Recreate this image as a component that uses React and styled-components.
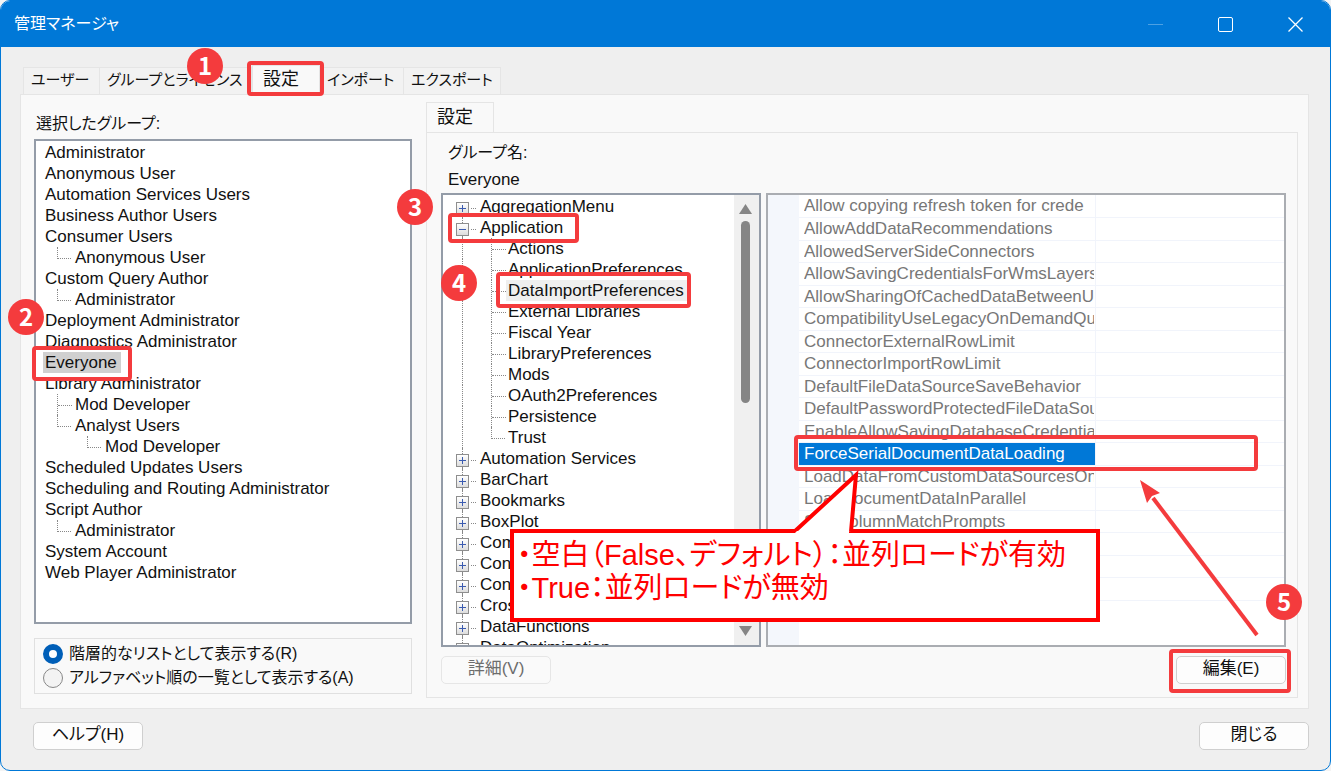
import { useState } from "react";
import styled, { createGlobalStyle } from "styled-components";

const GlobalStyle = createGlobalStyle`
  * {
    box-sizing: border-box;
  }
  body {
    margin: 0;
    background: #f4f4f4;
    color: #111;
    font-family: "Liberation Sans", "Noto Sans CJK JP", sans-serif;
    font-size: 17px;
    font-feature-settings: "palt";
  }
  button, input {
    font: inherit;
    font-feature-settings: inherit;
    color: inherit;
  }
`;

const Window = styled.main`
  display: flex;
  flex-direction: column;
  min-height: 100vh;
  border: 1px solid #0078d7;
  border-radius: 10px;
  background: #efefef;
  overflow: hidden;
`;

const TitleBar = styled.header`
  display: flex;
  align-items: center;
  justify-content: space-between;
  height: 46px;
  padding-left: 13px;
  background: #0078d7;
  color: white;
`;

const Title = styled.h1`
  margin: 0 0 4px;
  font-size: 16px;
  font-weight: 400;
`;

const WindowButtons = styled.div`
  display: flex;
  height: 100%;
`;

const WindowButton = styled.button`
  display: flex;
  align-items: center;
  justify-content: center;
  width: 70px;
  padding: 0;
  border: none;
  background: none;
  opacity: ${(props) => (props.disabled ? 0.3 : 1)};
`;

const Body = styled.div`
  flex: 1;
  display: flex;
  flex-direction: column;
  padding: 18px 21px 0 19px;
`;

const TabStrip = styled.div`
  display: flex;
  align-items: flex-end;
  height: 30px;
  padding-left: 3px;
  margin-bottom: -1px;
`;

const Tab = styled.button`
  position: relative;
  width: ${(props) => props.$width}px;
  height: ${(props) => (props.$active ? 30 : 28)}px;
  padding: 0 0 2px ${(props) => (props.$active ? 10 : 7)}px;
  border: 1px solid #e5e5e5;
  border-left-width: ${(props) => (props.$first || props.$active ? 1 : 0)}px;
  border-bottom-color: ${(props) => (props.$active ? "#f9f9f9" : "#e5e5e5")};
  background: ${(props) => (props.$active ? "#f9f9f9" : "#f2f2f2")};
  font-size: ${(props) => (props.$active ? 18 : 15)}px;
  line-height: 24px;
  text-align: left;
  white-space: nowrap;
`;

const Panel = styled.section`
  flex: 1;
  display: flex;
  gap: 14px;
  padding: 7px 10px 10px 13px;
  border: 1px solid #e5e5e5;
  background: #f9f9f9;
`;

const GroupColumn = styled.div`
  display: flex;
  flex-direction: column;
  width: 378px;
  padding: 12px 0 4px;
`;

const Caption = styled.h2`
  margin: 0 0 5px 2px;
  font-size: 16px;
  font-weight: 400;
  line-height: 20px;
`;

const GroupList = styled.ul`
  flex: 1;
  margin: 0;
  padding: 1px 0 0 9px;
  border: 2px solid #949ca8;
  background: white;
  list-style: none;
`;

const Row = styled.li`
  position: relative;
  display: flex;
  align-items: center;
  height: 21px;
  line-height: 21px;
  white-space: nowrap;
`;

const Name = styled.span`
  padding: 0 4px 0 2px;
  margin-left: -2px;
  background: ${(props) => props.$fill || "none"};
`;

const Guide = styled.span`
  align-self: stretch;
  width: ${(props) => props.$width}px;
  margin-left: ${(props) => props.$indent}px;
  border-left: ${(props) => (props.$last ? "none" : "1px dotted #888")};
`;

const Arm = styled.span`
  display: block;
  width: 14px;
  height: 12px;
  border-left: ${(props) => (props.$last ? "1px dotted #888" : "none")};
  border-bottom: 1px dotted #888;
`;

const ViewOptions = styled.fieldset`
  display: flex;
  flex-direction: column;
  height: 56px;
  margin: 14px 0 0;
  padding: 3px 8px;
  border: 1px solid #e0e0e0;
`;

const Option = styled.label`
  display: flex;
  align-items: center;
  gap: 6px;
  height: 24px;
  font-size: 16px;
  line-height: 24px;
  white-space: nowrap;
`;

const Radio = styled.input`
  appearance: none;
  width: 20px;
  height: 20px;
  margin: 0;
  border: 1px solid #888;
  border-radius: 50%;
  background: #f3f3f3;
  &:checked {
    border: 6px solid #005fb8;
    background: white;
  }
`;

const SettingsColumn = styled.div`
  flex: 1;
  display: flex;
  flex-direction: column;
  min-width: 0;
`;

const SubTab = styled.button`
  align-self: flex-start;
  width: 68px;
  height: 31px;
  margin-bottom: -1px;
  padding: 0 0 2px 10px;
  border: 1px solid #e5e5e5;
  border-bottom-color: #f9f9f9;
  background: #f9f9f9;
  font-size: 18px;
  line-height: 24px;
  text-align: left;
`;

const SubPanel = styled.div`
  flex: 1;
  display: flex;
  flex-direction: column;
  padding: 6px 11px 13px 14px;
  border: 1px solid #e5e5e5;
`;

const GroupName = styled.dl`
  margin: 0 0 0 7px;
  line-height: 27px;
  dt {
    font-size: 16px;
  }
  dd {
    margin: 0;
  }
`;

const Split = styled.div`
  position: relative;
  flex: 1;
  display: flex;
  gap: 5px;
`;

const TreePane = styled.div`
  position: relative;
  display: flex;
  width: 320px;
  border: 2px solid #949ca8;
  background: white;
`;

const Tree = styled.ul`
  flex: 1;
  height: 450px;
  margin: 0;
  padding: 1px 0 0 12px;
  overflow: hidden;
  list-style: none;
`;

const ToggleCell = styled.span`
  display: flex;
  flex-direction: column;
  align-items: center;
  align-self: stretch;
  width: 15px;
`;

const Stem = styled.span`
  flex: ${(props) => props.$grow};
  border-left: 1px dotted ${(props) => (props.$hidden ? "transparent" : "#888")};
`;

const Toggle = styled.button`
  width: 13px;
  height: 13px;
  padding: 0;
  border: 1px solid #8e8e8e;
  background: linear-gradient(#fff, #ddd);
  line-height: 0;
`;

const Dash = styled.span`
  width: 5px;
  height: 1px;
  margin: 3px 4px 0 1px;
  border-top: 1px dotted #888;
`;

const ScrollBar = styled.div`
  display: flex;
  flex-direction: column;
  align-items: center;
  width: 25px;
  padding: 9px 2px 9px 0;
  background: #f0f0f0;
`;

const Thumb = styled.div`
  width: 9px;
  height: 182px;
  margin: 7px 0 auto;
  border-radius: 5px;
  background: #858585;
`;

const PropertyPane = styled.div`
  position: relative;
  flex: 1;
  display: flex;
  align-items: flex-start;
  min-width: 0;
  border: 2px solid #aaadb2;
  background: white;
`;

const Gutter = styled.div`
  align-self: stretch;
  width: 31px;
  background: #f4f7fc;
`;

const Properties = styled.table`
  flex: 1;
  table-layout: fixed;
  width: 100%;
  border-collapse: collapse;
  color: #777;
  tr {
    height: 22px;
  }
  tr:nth-child(even) {
    height: 23px;
  }
  th, td {
    padding: 0;
    border-bottom: 1px solid #f1f4fb;
    line-height: 21px;
  }
`;

const PropertyName = styled.th`
  width: 296px;
  border-right: 1px solid #f1f4fb;
  background: ${(props) => (props.$selected ? "#0078d7" : "none")};
  color: ${(props) => (props.$selected ? "white" : "inherit")};
  font-weight: 400;
  text-align: left;
`;

const Clip = styled.div`
  margin: 0 1px 0 5px;
  overflow: hidden;
  white-space: nowrap;
`;

const Buttons = styled.div`
  display: flex;
  justify-content: space-between;
  padding: ${(props) => props.$padding};
`;

const Anchor = styled.div`
  position: relative;
`;

const Button = styled.button`
  display: block;
  width: 110px;
  height: 28px;
  padding: 0 0 2px;
  border: 1px solid ${(props) => (props.disabled ? "#e6e6e6" : "#cfcfcf")};
  border-radius: 5px;
  background: ${(props) => (props.disabled ? "#fafafa" : "#fdfdfd")};
  color: ${(props) => (props.disabled ? "#6d6d6d" : "#111")};
  font-size: 17px;
  line-height: 24px;
`;

// Annotations drawn over the dialog
const Frame = styled.span`
  position: absolute;
  z-index: 1;
  inset: ${(props) => props.$inset};
  border: 4px solid #f43b3d;
  border-radius: 4px;
  pointer-events: none;
`;

const NameFrame = styled(Frame)`
  width: 100px;
`;

const Badge = styled.span`
  position: absolute;
  z-index: 2;
  top: ${(props) => props.$top}px;
  left: ${(props) => props.$left}px;
  width: 36px;
  height: 36px;
  border-radius: 50%;
  background: #f43b3d;
  color: white;
  font-family: "Noto Sans CJK JP", sans-serif;
  font-size: 24px;
  font-weight: 700;
  line-height: 34px;
  text-align: center;
`;

const Callout = styled.div`
  position: absolute;
  z-index: 2;
  top: 336px;
  left: 69px;
  width: 590px;
  height: 93px;
  padding: 6px 3px 0;
  border: 4px solid #ff0000;
  background: white;
  color: #ff0000;
  font-size: 29px;
  line-height: 33px;
  white-space: nowrap;
  p {
    margin: 0;
  }
`;

const Tail = styled.svg`
  position: absolute;
  top: -64px;
  left: 274px;
`;

const Arrow = styled.svg`
  position: absolute;
  z-index: 1;
  top: 283px;
  right: 24px;
`;

const groups = [
  { name: "Administrator" },
  { name: "Anonymous User" },
  { name: "Automation Services Users" },
  { name: "Business Author Users" },
  { name: "Consumer Users" },
  { name: "Anonymous User", level: 1, last: true },
  { name: "Custom Query Author" },
  { name: "Administrator", level: 1, last: true },
  { name: "Deployment Administrator" },
  { name: "Diagnostics Administrator" },
  { name: "Everyone", selected: true },
  { name: "Library Administrator" },
  { name: "Mod Developer", level: 1 },
  { name: "Analyst Users", level: 1, last: true },
  { name: "Mod Developer", level: 2, last: true },
  { name: "Scheduled Updates Users" },
  { name: "Scheduling and Routing Administrator" },
  { name: "Script Author" },
  { name: "Administrator", level: 1, last: true },
  { name: "System Account" },
  { name: "Web Player Administrator" },
];

const nodes = [
  { name: "AggregationMenu" },
  {
    name: "Application",
    children: [
      "Actions",
      "ApplicationPreferences",
      "DataImportPreferences",
      "External Libraries",
      "Fiscal Year",
      "LibraryPreferences",
      "Mods",
      "OAuth2Preferences",
      "Persistence",
      "Trust",
    ],
  },
  { name: "Automation Services" },
  { name: "BarChart" },
  { name: "Bookmarks" },
  { name: "BoxPlot" },
  { name: "Comments" },
  { name: "Connections" },
  { name: "Connectors" },
  { name: "CrossTable" },
  { name: "DataFunctions" },
  { name: "DataOptimization" },
];

const properties = [
  "Allow copying refresh token for crede",
  "AllowAddDataRecommendations",
  "AllowedServerSideConnectors",
  "AllowSavingCredentialsForWmsLayers",
  "AllowSharingOfCachedDataBetweenUsers",
  "CompatibilityUseLegacyOnDemandQuery",
  "ConnectorExternalRowLimit",
  "ConnectorImportRowLimit",
  "DefaultFileDataSourceSaveBehavior",
  "DefaultPasswordProtectedFileDataSource",
  "EnableAllowSavingDatabaseCredentia",
  "ForceSerialDocumentDataLoading",
  "LoadDataFromCustomDataSourcesOn",
  "LoadDocumentDataInParallel",
  "SkipColumnMatchPrompts",
  "",
  "",
  "",
];

const TreeNode = ({ node, first }) => (
  <>
    <Row>
      <ToggleCell>
        <Stem $grow={6} $hidden={first} />
        <Toggle aria-label={node.name}>
          <svg width="11" height="11" stroke="#3b5bb0" strokeWidth="1">
            <path d={node.children ? "M2 5.5H9" : "M2 5.5H9M5.5 2V9"} />
          </svg>
        </Toggle>
        <Stem $grow={2} />
      </ToggleCell>
      <Dash />
      <Name>{node.name}</Name>
    </Row>
    {node.children?.map((child, i) => {
      const last = i === node.children.length - 1;
      return (
        <Row key={child}>
          <Guide $indent={7} $width={29} />
          <Guide $indent={0} $width={17} $last={last}>
            <Arm $last={last} />
          </Guide>
          <Name $fill={child === "DataImportPreferences" && "#efefef"}>
            {child}
          </Name>
        </Row>
      );
    })}
  </>
);

const App = () => {
  const [view, setView] = useState("tree");

  return (
    <>
      <GlobalStyle />
      <Window>
        <TitleBar>
          <Title>管理マネージャ</Title>
          <WindowButtons>
            <WindowButton aria-label="最小化" disabled>
              <svg width="15" height="15" stroke="white">
                <path d="M0 7.5H15" />
              </svg>
            </WindowButton>
            <WindowButton aria-label="最大化">
              <svg width="15" height="15" stroke="white" fill="none">
                <rect x="0.5" y="0.5" width="14" height="14" rx="1.5" />
              </svg>
            </WindowButton>
            <WindowButton aria-label="ウィンドウを閉じる">
              <svg width="15" height="15" stroke="white" strokeWidth="1.3">
                <path d="M0.5 0.5L14.5 14.5M14.5 0.5L0.5 14.5" />
              </svg>
            </WindowButton>
          </WindowButtons>
        </TitleBar>

        <Body>
          <TabStrip role="tablist">
            <Tab role="tab" $width={77} $first>
              ユーザー
            </Tab>
            <Tab role="tab" $width={152}>
              グループとライセンス
            </Tab>
            <Tab role="tab" aria-selected $width={68} $active>
              設定
              <Frame $inset="-5px -5px -2px -6px" />
              <Badge $top={-18} $left={-66}>
                1
              </Badge>
            </Tab>
            <Tab role="tab" $width={84}>
              インポート
            </Tab>
            <Tab role="tab" $width={97}>
              エクスポート
            </Tab>
          </TabStrip>

          <Panel>
            <GroupColumn>
              <Caption>選択したグループ:</Caption>
              <GroupList>
                {groups.map((group, i) => (
                  <Row key={i}>
                    {group.level && (
                      <Guide
                        $indent={group.level * 30 - 18}
                        $width={18}
                        $last={group.last}
                      >
                        <Arm $last={group.last} />
                      </Guide>
                    )}
                    <Name $fill={group.selected && "#d0d0d0"}>
                      {group.name}
                    </Name>
                    {group.selected && (
                      <>
                        <NameFrame $inset="-6px auto -8px -13px" />
                        <Badge $top={-53} $left={-37}>
                          2
                        </Badge>
                      </>
                    )}
                  </Row>
                ))}
              </GroupList>
              <ViewOptions>
                <Option>
                  <Radio
                    type="radio"
                    name="view"
                    checked={view === "tree"}
                    onChange={() => setView("tree")}
                  />
                  階層的なリストとして表示する(R)
                </Option>
                <Option>
                  <Radio
                    type="radio"
                    name="view"
                    checked={view === "alphabet"}
                    onChange={() => setView("alphabet")}
                  />
                  アルファベット順の一覧として表示する(A)
                </Option>
              </ViewOptions>
            </GroupColumn>

            <SettingsColumn>
              <SubTab role="tab" aria-selected>
                設定
              </SubTab>
              <SubPanel>
                <GroupName>
                  <dt>グループ名:</dt>
                  <dd>Everyone</dd>
                </GroupName>
                <Split>
                  <TreePane>
                    <Tree>
                      {nodes.map((node, i) => (
                        <TreeNode key={node.name} node={node} first={i === 0} />
                      ))}
                    </Tree>
                    <ScrollBar>
                      <svg width="13" height="10" fill="#858585">
                        <path d="M6.5 0L13 10H0Z" />
                      </svg>
                      <Thumb />
                      <svg width="13" height="10" fill="#858585">
                        <path d="M6.5 10L13 0H0Z" />
                      </svg>
                    </ScrollBar>
                    <Frame $inset="18px 180px 402px 5px" />
                    <Frame $inset="77px 68px 337px 53px" />
                    <Badge $top={-6} $left={-46}>
                      3
                    </Badge>
                    <Badge $top={70} $left={-2}>
                      4
                    </Badge>
                  </TreePane>
                  <PropertyPane>
                    <Gutter />
                    <Properties>
                      <tbody>
                        {properties.map((name, i) => (
                          <tr key={i}>
                            <PropertyName scope="row" $selected={i === 11}>
                              <Clip>{name || "\u00a0"}</Clip>
                            </PropertyName>
                            <td />
                          </tr>
                        ))}
                      </tbody>
                    </Properties>
                    <Frame $inset="240px 26px 174px 26px" />
                    <Arrow width="122" height="160" viewBox="0 0 122 160">
                      <path
                        d="M119 157L15 20"
                        stroke="#f43b3d"
                        strokeWidth="4"
                      />
                      <path d="M2 2L22 15L14 18L9 25Z" fill="#f43b3d" />
                    </Arrow>
                  </PropertyPane>
                  <Callout>
                    <Tail width="90" height="66" viewBox="0 0 90 66">
                      <path
                        d="M6 63L68 6L63 63"
                        fill="white"
                        stroke="#ff0000"
                        strokeWidth="4"
                      />
                      <path d="M9 62H61V66H5Z" fill="white" />
                    </Tail>
                    <p>・空白（False、デフォルト）：並列ロードが有効</p>
                    <p>・True：並列ロードが無効</p>
                  </Callout>
                </Split>
                <Buttons $padding="9px 0 0">
                  <Button disabled>詳細(V)</Button>
                  <Anchor>
                    <Button>編集(E)</Button>
                    <Frame $inset="-7px -5px -9px -7px" />
                    <Badge $top={-72} $left={90}>
                      5
                    </Badge>
                  </Anchor>
                </Buttons>
              </SubPanel>
            </SettingsColumn>
          </Panel>

          <Buttons $padding="13px 0 20px 13px">
            <Button>ヘルプ(H)</Button>
            <Button>閉じる</Button>
          </Buttons>
        </Body>
      </Window>
    </>
  );
};

export default App;
